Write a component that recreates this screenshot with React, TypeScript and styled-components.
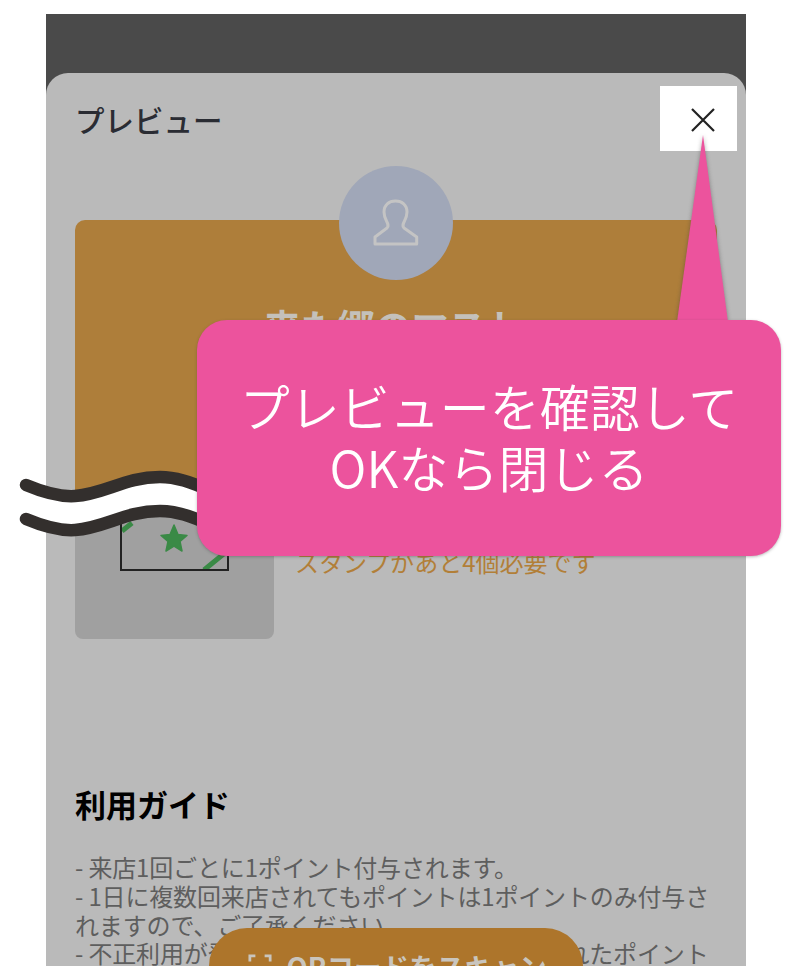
import React from "react";
import styled, { createGlobalStyle } from "styled-components";

const GlobalStyle = createGlobalStyle`
  html, body {
    margin: 0;
    padding: 0;
    background: #fff;
    font-family: "Noto Sans CJK JP", "Noto Sans", sans-serif;
  }
`;

const Page = styled.div`
  position: relative;
  width: 802px;
  height: 980px;
  padding: 14px 0 0 46px;
  box-sizing: border-box;
  overflow: hidden;
`;

const Frame = styled.div`
  position: relative;
  width: 700px;
  height: 952px;
  background: #4a4a4a;
  overflow: hidden;
  padding-top: 59px;
  box-sizing: border-box;
`;

const Sheet = styled.div`
  background: #bababa;
  border-radius: 22px 22px 0 0;
  height: 1000px;
`;

const SheetHeader = styled.div`
  display: flex;
  justify-content: space-between;
  align-items: center;
  padding: 13px 9px 0 29px;
`;

const SheetTitle = styled.h1`
  margin: 1px 0 0;
  font-size: 29.5px;
  line-height: 40px;
  font-weight: 500;
  color: #2a2c33;
`;

const CloseButton = styled.button`
  width: 77px;
  height: 65px;
  padding: 0 0 0 8px;
  border: 0;
  background: #fff;
  display: flex;
  align-items: center;
  justify-content: center;
`;

const Content = styled.div`
  padding: 15px 29px 0;
`;

const Avatar = styled.div`
  position: relative;
  z-index: 1;
  width: 114px;
  height: 114px;
  margin: 0 auto -60px;
  border-radius: 50%;
  background: #a0a7b8;
  display: flex;
  align-items: center;
  justify-content: center;
`;

const Card = styled.div`
  height: 280px;
  box-sizing: border-box;
  padding-top: 84px;
  border-radius: 10px 10px 0 0;
  background: #ae7e3a;
  text-align: center;
`;

const CardTitle = styled.div`
  font-size: 37px;
  line-height: 44px;
  font-weight: 700;
  color: #c4c1bb;
  margin-right: 6px;
`;

const StampRow = styled.div`
  display: flex;
`;

const StampThumb = styled.div`
  width: 199px;
  height: 139px;
  box-sizing: border-box;
  padding-bottom: 68px;
  border-radius: 0 0 8px 8px;
  background: #a0a0a0;
  display: flex;
  align-items: flex-end;
  justify-content: center;
`;

const StampInfo = styled.div`
  padding: 45px 0 0 21px;
  font-size: 24px;
  line-height: 34px;
  color: #b27f38;
`;

const Guide = styled.section`
  margin-top: 142px;
`;

const GuideTitle = styled.h2`
  margin: 0 0 26px;
  font-size: 31px;
  line-height: 46px;
  font-weight: 700;
  color: #000;
`;

const GuideText = styled.p`
  margin: 0;
  font-size: 24px;
  line-height: 28.8px;
  letter-spacing: -0.15px;
  color: #5e5e5e;
`;

const ScanButton = styled.button`
  position: absolute;
  left: 163px;
  top: 914px;
  width: 374px;
  height: 76px;
  padding: 0 0 0 2px;
  border: 0;
  border-radius: 40px;
  background: #ad752b;
  color: #c9c5be;
  font-family: inherit;
  font-size: 27.5px;
  font-weight: 700;
  display: flex;
  align-items: center;
  justify-content: center;
  gap: 15px;
`;

const WaveBreak = styled.svg`
  position: absolute;
  left: 0;
  top: 460px;
`;

const CalloutPointer = styled.svg`
  position: absolute;
  left: 660px;
  top: 130px;
  filter: drop-shadow(0 0 2px rgba(60, 60, 60, 0.45));
`;

const Callout = styled.div`
  position: absolute;
  left: 197px;
  top: 320px;
  width: 584px;
  height: 236px;
  box-sizing: border-box;
  padding-top: 55px;
  border-radius: 30px;
  background: #ec539d;
  box-shadow: 0 1px 3px rgba(60, 60, 60, 0.35);
  color: #fff;
  font-size: 50px;
  font-weight: 350;
  line-height: 61px;
  text-align: center;
`;

const wavePath = "M26 0 C45 8 60 12 75 11 C105 9 125 -8 160 -8 C175 -8 190 -4 210 6";

export default function App() {
  return (
    <>
      <GlobalStyle />
      <Page>
        <Frame>
          <Sheet>
            <SheetHeader>
              <SheetTitle>プレビュー</SheetTitle>
              <CloseButton aria-label="閉じる">
                <svg width="26" height="26" viewBox="0 0 26 26" style={{ marginTop: 3 }}>
                  <path d="M2 2 L24 24 M24 2 L2 24" stroke="#222" strokeWidth="2.2" fill="none" />
                </svg>
              </CloseButton>
            </SheetHeader>
            <Content>
              <Avatar>
                <svg width="48" height="48" viewBox="0 0 48 48" fill="none">
                  <path
                    d="M3 45 V38 L15 29 C17 27 16 25 14.5 22 C13 19 12 16.5 12 13 C12 6 17 2 23.5 2 C30 2 35 6 35 13 C35 16.5 34 19 32.5 22 C31 25 30 27 32 29 L44.7 38 V45 Z"
                    stroke="#c4c4c4"
                    strokeWidth="3"
                    strokeLinejoin="round"
                  />
                </svg>
              </Avatar>
              <Card>
                <CardTitle>来た郷のマスト</CardTitle>
              </Card>
              <StampRow>
                <StampThumb>
                  <svg width="109" height="90" viewBox="0 0 109 90" fill="none">
                    <path d="M2 50 L12 42 M84 89 L106 71" stroke="#3a8a46" strokeWidth="5" />
                    <rect x="1" y="1" width="107" height="88" stroke="#222" strokeWidth="2" />
                    <path
                      d="M54 44 L58 53.5 L67 54.5 L60 60.5 L62 70 L54 65 L46 70 L48 60.5 L41 54.5 L50 53.5 Z"
                      fill="#3a8a46"
                      stroke="#3a8a46"
                      strokeWidth="1.5"
                      strokeLinejoin="round"
                    />
                  </svg>
                </StampThumb>
                <StampInfo>スタンプがあと4個必要です</StampInfo>
              </StampRow>
              <Guide>
                <GuideTitle>利用ガイド</GuideTitle>
                <GuideText>
                  - 来店1回ごとに1ポイント付与されます。
                  <br />
                  - 1日に複数回来店されてもポイントは1ポイントのみ付与されますので、ご了承ください。
                  <br />
                  - 不正利用が発覚した場合は、これまで付与されたポイント
                </GuideText>
              </Guide>
            </Content>
          </Sheet>
          <ScanButton>
            <svg width="24" height="24" viewBox="0 0 26 26" fill="none" stroke="#c9c5be" strokeWidth="3">
              <path d="M2 8 V2 H8 M18 2 H24 V8 M2 18 V24 H8 M18 24 H24 V18" />
            </svg>
            QRコードをスキャン
          </ScanButton>
        </Frame>
        <WaveBreak width="240" height="100" viewBox="0 0 240 100" fill="none">
          <g transform="translate(0 25)">
            <path d={wavePath} transform="translate(0 17)" stroke="#fff" strokeWidth="30" />
            <path d={wavePath} stroke="#332f2d" strokeWidth="12.5" strokeLinecap="round" />
            <path d={wavePath} transform="translate(0 34)" stroke="#332f2d" strokeWidth="12.5" strokeLinecap="round" />
          </g>
        </WaveBreak>
        <CalloutPointer width="90" height="195" viewBox="0 0 90 195">
          <path d="M43 5 L68 192 H17 Z" fill="#ec539d" />
        </CalloutPointer>
        <Callout>
          プレビューを確認して
          <br />
          OKなら閉じる
        </Callout>
      </Page>
    </>
  );
}
